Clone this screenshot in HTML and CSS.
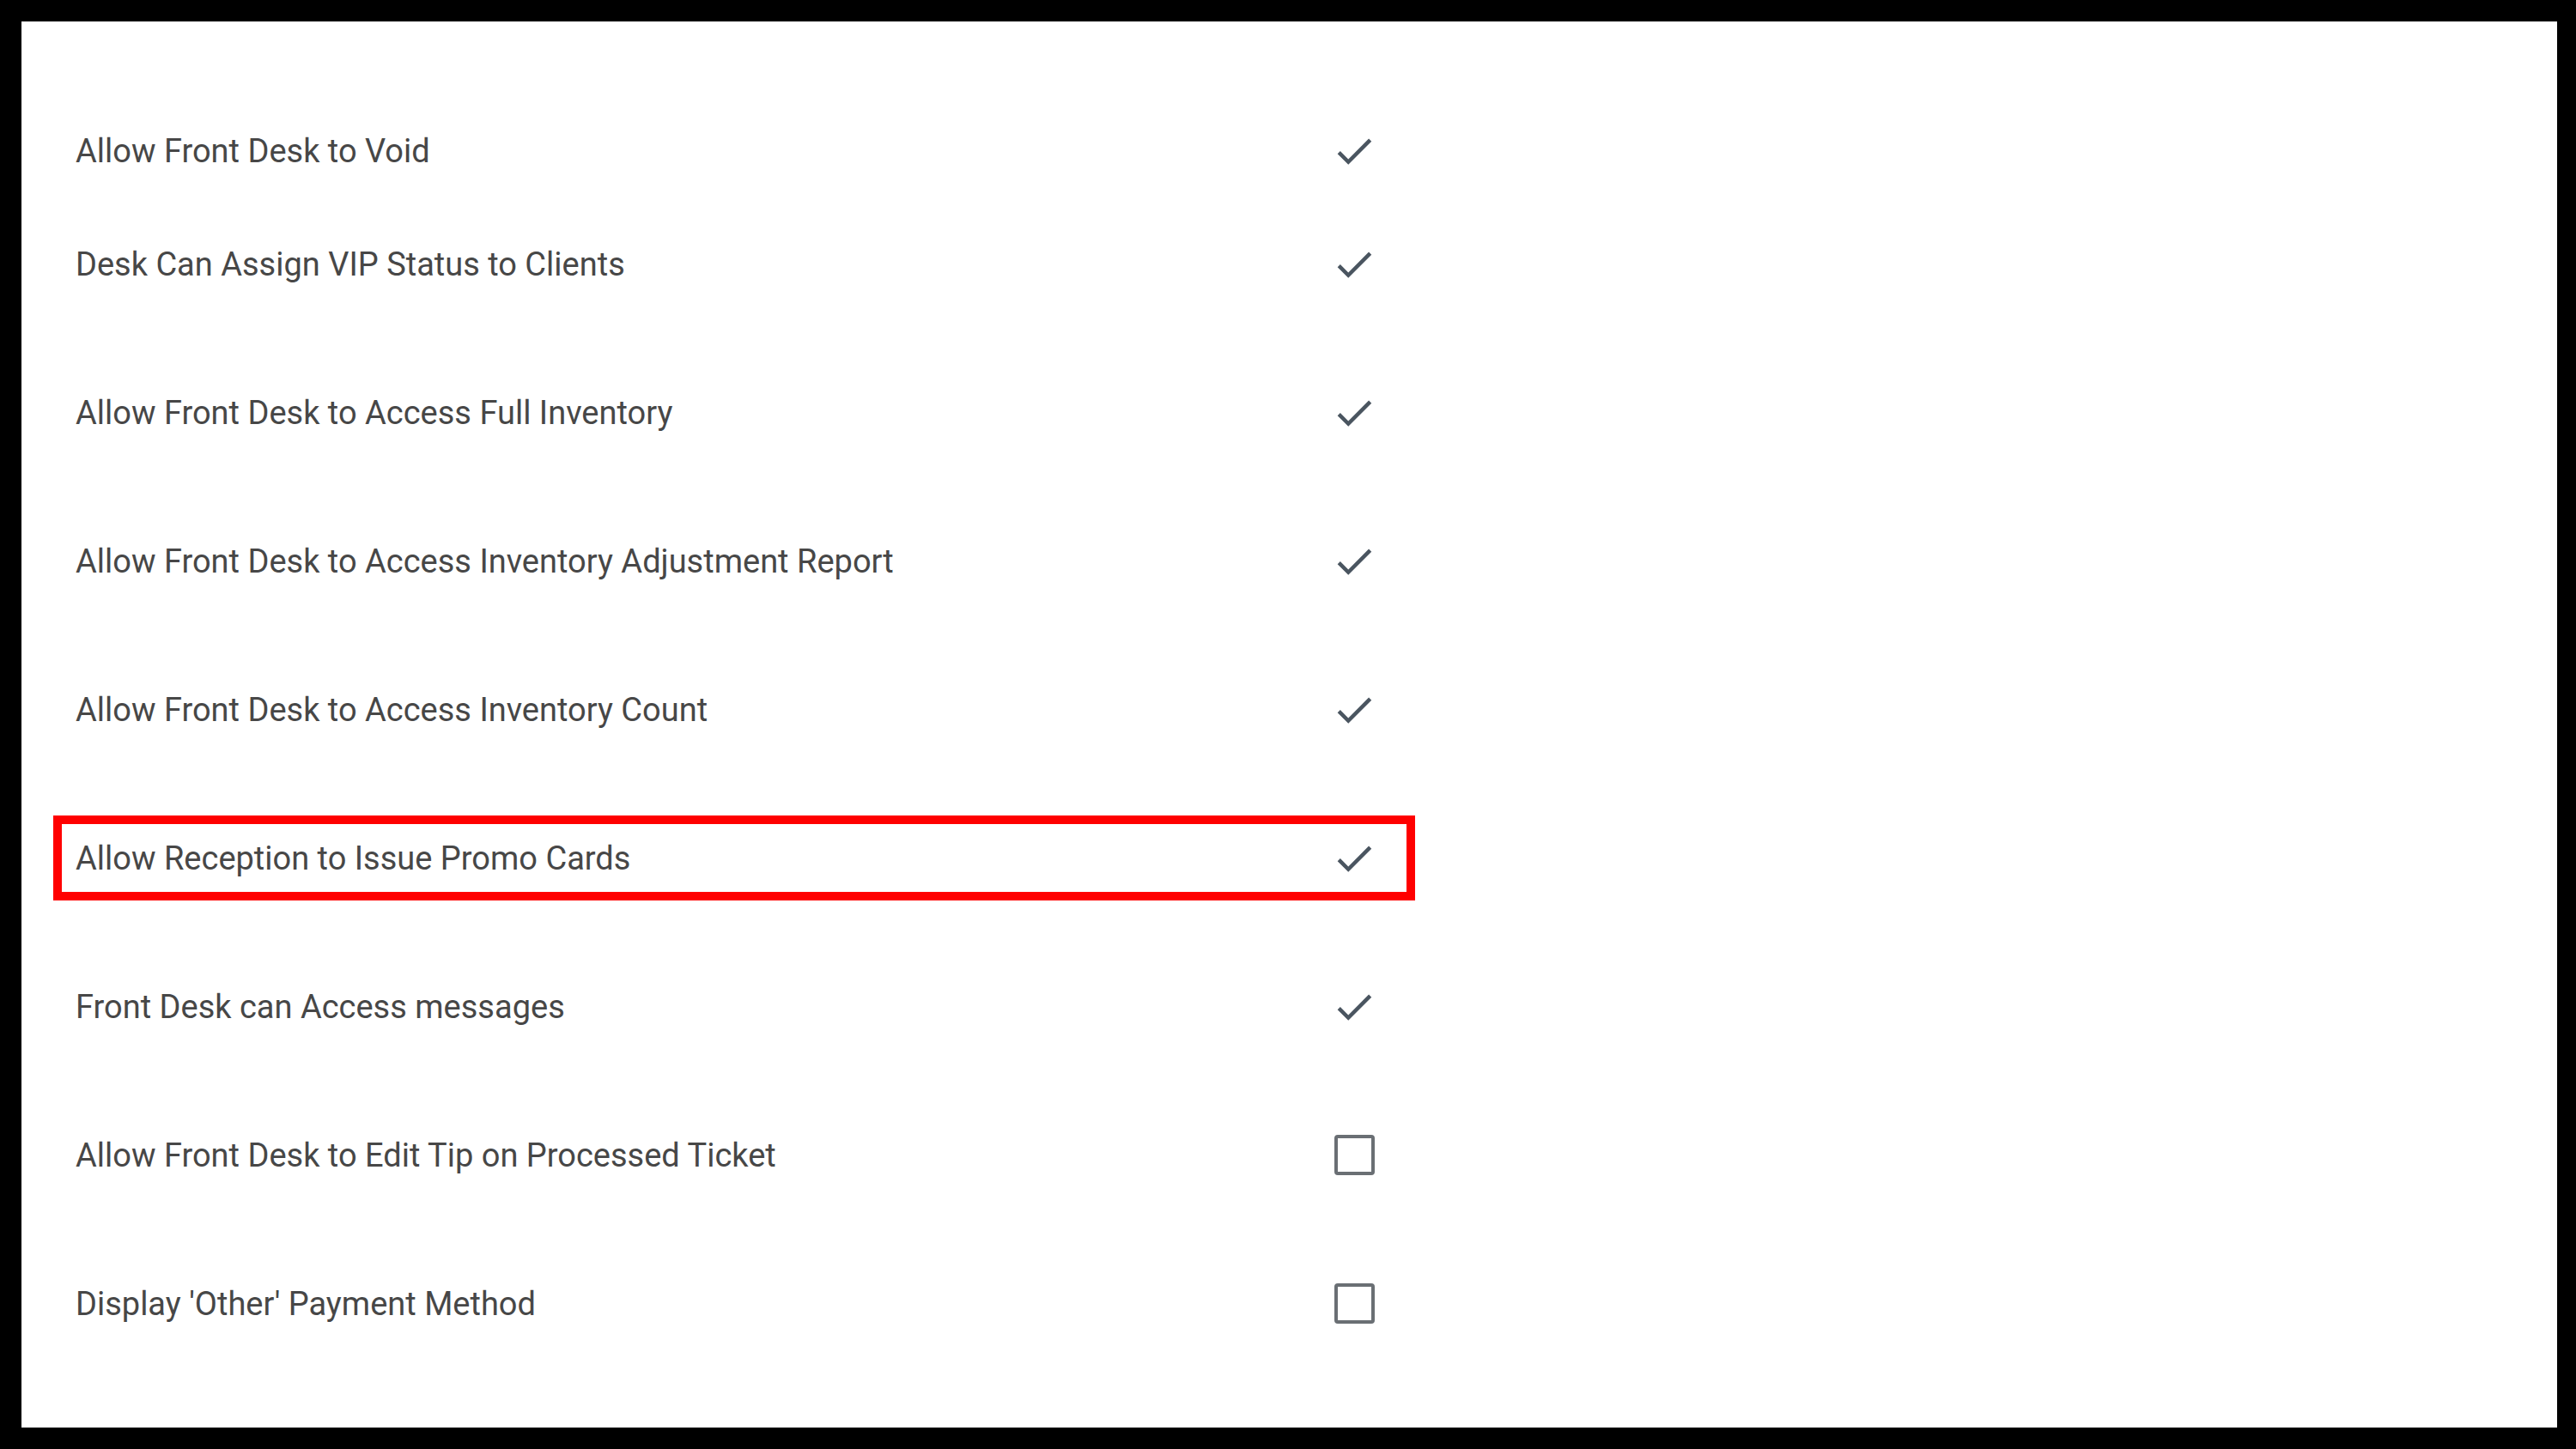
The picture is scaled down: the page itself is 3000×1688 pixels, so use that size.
FILE: index.html
```html
<!DOCTYPE html>
<html lang="en">
<head>
<meta charset="utf-8">
<title>Front Desk Settings</title>
<link rel="stylesheet" href="styles.css">
</head>
<body>
<div class="frame">
  <main class="panel">
    <ul class="settings">
      <li class="row row-first">
        <span class="label">Allow Front Desk to Void</span>
        <span class="state"><svg class="check" viewBox="0 0 24 24"><path d="M9 16.17L4.83 12l-1.42 1.41L9 19 21 7l-1.41-1.41z"/></svg></span>
      </li>
      <li class="row row-second">
        <span class="label">Desk Can Assign VIP Status to Clients</span>
        <span class="state"><svg class="check" viewBox="0 0 24 24"><path d="M9 16.17L4.83 12l-1.42 1.41L9 19 21 7l-1.41-1.41z"/></svg></span>
      </li>
      <li class="row">
        <span class="label">Allow Front Desk to Access Full Inventory</span>
        <span class="state"><svg class="check" viewBox="0 0 24 24"><path d="M9 16.17L4.83 12l-1.42 1.41L9 19 21 7l-1.41-1.41z"/></svg></span>
      </li>
      <li class="row">
        <span class="label">Allow Front Desk to Access Inventory Adjustment Report</span>
        <span class="state"><svg class="check" viewBox="0 0 24 24"><path d="M9 16.17L4.83 12l-1.42 1.41L9 19 21 7l-1.41-1.41z"/></svg></span>
      </li>
      <li class="row">
        <span class="label">Allow Front Desk to Access Inventory Count</span>
        <span class="state"><svg class="check" viewBox="0 0 24 24"><path d="M9 16.17L4.83 12l-1.42 1.41L9 19 21 7l-1.41-1.41z"/></svg></span>
      </li>
      <li class="row row-highlight">
        <span class="label">Allow Reception to Issue Promo Cards</span>
        <span class="state"><svg class="check" viewBox="0 0 24 24"><path d="M9 16.17L4.83 12l-1.42 1.41L9 19 21 7l-1.41-1.41z"/></svg></span>
      </li>
      <li class="row">
        <span class="label">Front Desk can Access messages</span>
        <span class="state"><svg class="check" viewBox="0 0 24 24"><path d="M9 16.17L4.83 12l-1.42 1.41L9 19 21 7l-1.41-1.41z"/></svg></span>
      </li>
      <li class="row">
        <span class="label">Allow Front Desk to Edit Tip on Processed Ticket</span>
        <span class="state"><span class="box"></span></span>
      </li>
      <li class="row">
        <span class="label">Display 'Other' Payment Method</span>
        <span class="state"><span class="box"></span></span>
      </li>
    </ul>
  </main>
</div>
</body>
</html>
```

FILE: styles.css
```css
* {
  box-sizing: border-box;
}

html, body {
  margin: 0;
  padding: 0;
  background: #000;
}

body {
  width: 3000px;
  height: 1688px;
  font-family: Roboto, "Liberation Sans", sans-serif;
}

.frame {
  height: 100%;
  padding: 25px 22px 25px 25px;
  display: flex;
}

.panel {
  flex: 1;
  background: #fff;
  padding: 101px 0 0 37px;
}

.settings {
  list-style: none;
  margin: 0;
  padding: 0;
  width: 1586px;
  display: flex;
  flex-direction: column;
  gap: 74px;
}

.row {
  height: 99px;
  border: 10px solid transparent;
  padding: 0 34px 0 16px;
  display: flex;
  align-items: center;
  justify-content: space-between;
}

.row-second {
  margin-top: -41px;
}

.row-highlight {
  border-color: #ff0000;
}

.label {
  font-size: 38px;
  color: #474747;
  letter-spacing: 0;
  white-space: nowrap;
}

.state {
  width: 54px;
  height: 54px;
  display: flex;
  align-items: center;
  justify-content: center;
}

.check {
  width: 54px;
  height: 54px;
  fill: #4a5560;
}

.box {
  width: 47px;
  height: 47px;
  border: 4px solid #6a6f74;
  border-radius: 4px;
}
```
